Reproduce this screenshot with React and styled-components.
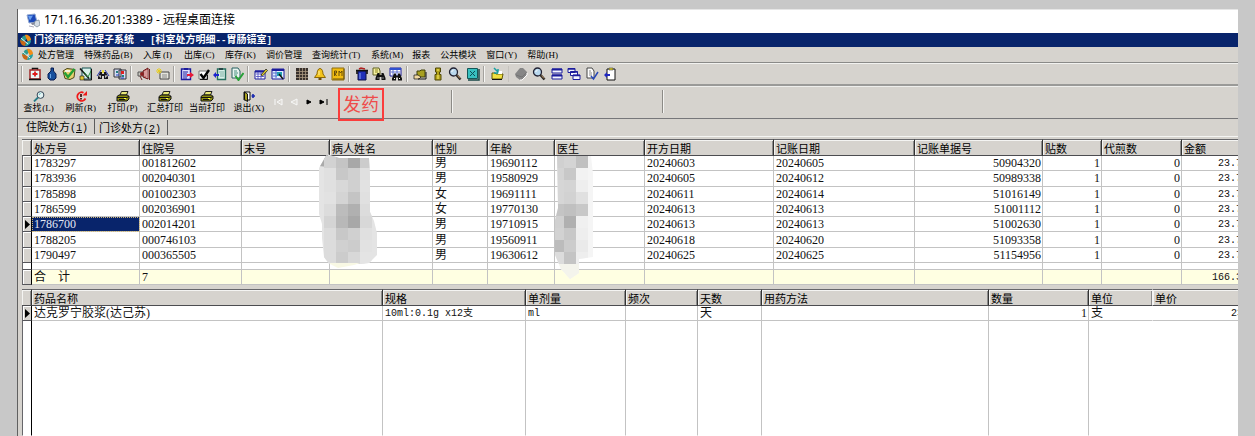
import React from "react";
import styled, { createGlobalStyle, css } from "styled-components";

const FACE = "#d6d3ce";
const NAVY = "#08246b";
const LINE = "#c3c3c3";
const SERIF = '"Liberation Serif", "Noto Sans CJK SC", serif';
const MONO = '"Liberation Mono", "Noto Sans CJK SC", monospace';

const GlobalStyle = createGlobalStyle`
  * { box-sizing: border-box; }
  body { margin: 0; background: #c8c8c8; color: #000; overflow: hidden; }
  button { font: inherit; color: inherit; background: none; border: 0; padding: 0; margin: 0; }
  svg { display: block; }
`;

const Desktop = styled.div`
  display: flex;
  flex-direction: column;
  height: 100vh;
  padding: 9px 17px 0;
`;

const Window = styled.main`
  flex: 1;
  min-height: 0;
  display: flex;
  flex-direction: column;
  overflow: hidden;
  background: ${FACE};
  border-left: 1px solid #606060;
`;

const RemoteTitle = styled.header`
  flex: none;
  display: flex;
  align-items: center;
  gap: 4px;
  height: 24px;
  padding: 0 0 3px 8px;
  border-top: 1px solid #e6e6e6;
  background: #fff;
  font: 12px/18px "Noto Sans", "Noto Sans CJK SC", sans-serif;
`;

const Caption = styled.div`
  flex: none;
  display: flex;
  align-items: center;
  gap: 2px;
  height: 14px;
  padding-left: 1px;
  background: ${NAVY};
  color: #fff;
  font: bold 10px/14px "Noto Sans CJK SC", sans-serif;
  white-space: pre;
`;

const Half = styled.span`
  font: bold 9px/14px "Liberation Mono", monospace;
`;

const MenuBar = styled.nav`
  flex: none;
  display: flex;
  align-items: center;
  gap: 10px;
  height: 15px;
  padding-left: 3px;
  font: 9px/14px ${SERIF};
`;

const SystemIconSlot = styled.span`
  width: 7px;
`;

const MenuItem = styled.button`
  display: flex;
  white-space: nowrap;
`;

const Mnemonic = styled.span`
  width: 13px;
  text-align: center;
`;

const IconBar = styled.div`
  flex: none;
  display: flex;
  align-items: center;
  height: 25px;
  padding: 0 0 3px 4px;
  border-top: 1px solid #8a8a88;
  box-shadow: inset 0 1px #f2f2f0, inset 0 -1px #eeeeec, inset 0 -3px #9a9a98;
`;

const IconGroup = styled.div`
  display: flex;
  justify-content: space-between;
  align-items: center;
  flex: none;
  width: ${(p) => p.$width}px;
  height: 16px;
  padding: 0 4px 0 5px;
  border-left: 1px solid ${(p) => (p.$soft ? "#c6c3be" : "#f6f6f4")};
  box-shadow: -1px 0 ${(p) => (p.$soft ? "transparent" : "#a4a29e")};
`;

const IconButton = styled.button`
  width: 14px;
  height: 14px;
`;

const ActionBar = styled.div`
  position: relative;
  flex: none;
  display: flex;
  align-items: stretch;
  height: 32px;
  border-bottom: 1px solid #77777a;
  font: 9px/11px ${SERIF};
`;

const ActionButton = styled.button`
  flex: none;
  display: flex;
  flex-direction: column;
  align-items: center;
  gap: 1px;
  width: 42px;
  padding-top: 4px;
`;

const ActionLabel = styled.span`
  display: flex;
  justify-content: center;
  white-space: nowrap;
`;

const Navigator = styled.div`
  flex: none;
  display: flex;
  align-items: center;
  gap: 5px;
  padding: 0 0 2px 4px;
`;

const NavButton = styled.button`
  width: 10px;
  height: 8px;
`;

const Divider = styled.i`
  flex: none;
  width: 2px;
  height: 23px;
  margin: 3px 0 0 ${(p) => p.$gap}px;
  border-left: 1px solid #8c8a86;
  border-right: 1px solid #f4f4f2;
`;

const Dispense = styled.button`
  position: absolute;
  z-index: 2;
  left: 320px;
  top: 1px;
  width: 46px;
  height: 33px;
  && {
    padding-bottom: 3px;
    border: 2px solid #fb3d3c;
    color: #ee4c4b;
    font: 18px/26px "Noto Sans CJK SC", sans-serif;
  }
`;

const Tabs = styled.div`
  flex: none;
  display: flex;
  height: 17px;
  padding-left: 1px;
`;

const Tab = styled.button`
  flex: none;
  width: ${(p) => (p.$active ? 76 : 73)}px;
  height: 15px;
  margin-top: ${(p) => (p.$active ? 0 : 1)}px;
  white-space: nowrap;
  text-align: left;
  && {
    padding-left: ${(p) => (p.$active ? 7 : 4)}px;
    border-right: 1px solid #5c5c5c;
    font: 11px/15px "Noto Sans CJK SC", sans-serif;
  }
`;

const TabKey = styled.span`
  font: 10px/15px ${MONO};
`;

const TabPage = styled.section`
  flex: 1;
  min-height: 0;
  display: flex;
  flex-direction: column;
  padding: 2px 0 0 4px;
  border-top: 1px solid #f4f4f2;
`;

const Pane = styled.div`
  position: relative;
  overflow: hidden;
  flex: ${(p) => (p.$fill ? "1" : "none")};
  min-height: 0;
  margin-bottom: ${(p) => (p.$fill ? 0 : 4)}px;
`;

const Grid = styled.table`
  table-layout: fixed;
  width: ${(p) => p.$width}px;
  min-width: 100%;
  height: ${(p) => p.$height};
  border-collapse: separate;
  border-spacing: 0;
  background: #fff;
`;

const cell = css`
  padding: 0 1px;
  overflow: hidden;
  white-space: pre;
  text-align: left;
`;

const Head = styled.th`
  ${cell}
  height: 17px;
  padding-left: 2px;
  background: ${FACE};
  border-top: 1px solid #66666a;
  border-bottom: 1px solid #4c4c50;
  border-right: 1px solid ${(p) => (p.$light ? "#f4f4f4" : "#333")};
  box-shadow: inset 1px 1px #f4f4f2, inset -1px 0 #8c8c8c;
  font: 11px/14px "Noto Sans CJK SC", sans-serif;
`;

const Marker = styled.td`
  ${cell}
  padding: 0;
  background: ${(p) => (p.$blank ? "#fff" : FACE)};
  border-left: 1px solid #66666a;
  border-right: 1px solid #000;
  border-bottom: 1px solid ${(p) => (p.$open ? "transparent" : "#55555a")};
  box-shadow: inset 1px 1px ${(p) => (p.$blank ? "transparent" : "#fff")};
`;

const Cell = styled.td`
  ${cell}
  padding: ${(p) => (p.$mono ? "2px" : "0")} 1px 0 2px;
  border-right: 1px solid ${(p) => (p.$noRule ? "transparent" : LINE)};
  border-bottom: 1px solid ${(p) => (p.$open ? "transparent" : LINE)};
  font: ${(p) => (p.$mono ? "10px/12px" : "12px/14px")} ${(p) => (p.$mono ? MONO : SERIF)};
  text-align: ${(p) => (p.$right ? "right" : "left")};
  background: ${(p) => (p.$total ? "#ffffe2" : p.$selected ? NAVY : "transparent")};
  color: ${(p) => (p.$selected ? "#e4e8f4" : "#111")};
  ${(p) => p.$selected && "outline: 1px dotted #d0b878; outline-offset: -1px;"}
`;

const Row = styled.tr`
  ${(p) => p.$height && `height: ${p.$height};`}
`;

const Mosaic = styled.svg`
  position: absolute;
  left: 296px;
  top: 15px;
  pointer-events: none;
`;

/* ---------- icons ---------- */

const K = "#111";
const B = "#1c1c9c";

const Glyph = ({ children }) => (
  <svg width="14" height="14" viewBox="0 0 14 14" fill="none" aria-hidden="true">
    {children}
  </svg>
);

const Binoculars = ({ c = K, x = 0, y = 0 }) => (
  <g transform={`translate(${x} ${y})`}>
    <path d="M2 3h2v2h2V3h2l2 5v2H6V7H4v3H0V8z" fill={c} />
    <path d="M2 8h1M7 8h1" stroke="#fff" />
  </g>
);

const Lens = () => (
  <>
    <circle cx="5.5" cy="5" r="4" fill="#b9d8ee" stroke="#223" strokeWidth="1.3" />
    <path d="M3.500 5l2-2.200" stroke="#fff" />
    <path d="M8.500 8l4 4.500" stroke="#222" strokeWidth="2.500" />
    <path d="M9.500 8.500l2.500 3" stroke="#b98a5a" />
  </>
);

const icons = {
  aid: (
    <>
      <path d="M4.500 3V1.500h5V3" stroke={K} strokeWidth="1.500" />
      <rect x="2" y="3" width="10" height="9" fill="#f4f4f4" stroke="#a02828" strokeWidth="1.500" />
      <rect x="3.500" y="4.500" width="7" height="5.500" fill="#dff8f8" />
      <path d="M7 4.500v5M4.500 7h5" stroke="#e01818" strokeWidth="1.800" />
      <path d="M1 12.500h12" stroke={K} strokeWidth="1.500" />
    </>
  ),
  bottle: (
    <>
      <path d="M6 1h2.500v3l2.500 3v4l-2 2H5l-2-2V7l3-3z" fill="#18509c" stroke="#0a1c50" />
      <path d="M5.500 7v4" stroke="#6aa8e8" />
    </>
  ),
  check: (
    <>
      <path d="M1 4l4-2.500 8 1-1 8-4 2-5-1z" fill="#e8d070" stroke="#4c4818" />
      <path d="M3 4h5" stroke="#fff" strokeWidth="1.500" />
      <path d="M2.500 5.500L6 10l6.500-8" stroke="#24a034" strokeWidth="2.400" />
    </>
  ),
  note: (
    <>
      <path d="M3 1h9v11H3z" fill="#d8f0ea" stroke="#145050" />
      <path d="M1 1.500l9 10" stroke="#111" strokeWidth="1.500" />
      <path d="M5 5l4 5 3-6" stroke="#2a8c3c" />
      <path d="M1 9h4v4H1z" fill="#e0c830" stroke={K} strokeWidth=".6" />
      <path d="M12.500 2v11H5" stroke={K} />
    </>
  ),
  search: (
    <>
      <Binoculars x={2} y={2} c="#16161e" />
      <path d="M1 9l4-6M9 3l4 6" stroke="#2838b0" />
      <path d="M6 3h2v3H6z" fill="#e8d838" />
      <path d="M3 9h2M9 9h2" stroke="#fff" />
    </>
  ),
  people: (
    <>
      <path d="M1 2h7v8H1zM6 3h7v9H6z" fill="#d4dcf4" stroke="#303038" />
      <path d="M3 4h2v2H3zM9 8h2v2H9z" fill="#208080" />
      <path d="M8 4h3v3H8z" fill="#e02020" />
      <path d="M3 8h3M8 11h3" stroke="#2040c0" />
    </>
  ),
  horn: (
    <>
      <path d="M6 4l5-3v11L6 10z" fill="#c87070" stroke="#6c1818" />
      <path d="M1 5h5v4H1z" fill="#c8c8c0" stroke="#555" />
      <path d="M3 7a2 2 0 1 0 4 0a2 2 0 1 0-4 0" fill="#8c2020" />
      <path d="M8 4v5M10 3v8" stroke="#fff" strokeWidth=".6" />
      <path d="M3 9l2 4M12.500 2v11" stroke="#702020" />
    </>
  ),
  card: (
    <>
      <path d="M4 5h9v7H4z" fill="#e4e4dc" stroke="#444" />
      <path d="M6 8h5M6 10h5" stroke="#888" />
      <path d="M3 1v6M0 4h6M1 2l4 4M5 2L1 6" stroke="#e6cc20" />
    </>
  ),
  clipboard: (
    <>
      <path d="M1.500 2h9v10.500h-9z" fill="#dfe0ff" stroke={B} strokeWidth="1.400" />
      <path d="M4 1h4v2H4z" fill={B} />
      <path d="M3 5h5M3 7h4M3 9h5M3 11h4" stroke={B} />
      <path d="M7 7h3V5l4 3-4 3V9H7z" fill="#e81838" />
    </>
  ),
  tick: (
    <>
      <path d="M2 4h8v8H2z" fill="#fff" stroke="#777" />
      <path d="M3.500 7l3 4L12 3" stroke="#000" strokeWidth="2.400" />
      <path d="M3 12.500h7.500V8" stroke={K} />
    </>
  ),
  paste: (
    <>
      <path d="M4.500 2h8v10.500h-8z" fill="#d8f0e8" stroke="#287060" strokeWidth="1.400" />
      <path d="M6 1h4v2H6z" fill="#284848" />
      <path d="M6 5h5M7 7h4M7 9h4" stroke="#80b0a4" />
      <path d="M6 7H3V5L0 8l3 3V9h3z" fill="#1c24d0" />
    </>
  ),
  pagecheck: (
    <>
      <path d="M2 1h6l2 3v7H2z" fill="#e8f4f0" stroke="#286060" />
      <path d="M4 4h3M4 6h4M4 8h3" stroke="#489080" />
      <path d="M5.500 9l3 4 5-7" stroke="#28a038" strokeWidth="2" />
    </>
  ),
  edit: (
    <>
      <path d="M1 4h10v8H1z" fill="#fff" stroke={B} />
      <path d="M1 4.500h10" stroke={B} strokeWidth="2" />
      <path d="M2 7h8M2 9.500h8M4 5v7M7 5v7" stroke="#4848c0" strokeWidth=".8" />
      <path d="M7 8l5-6 1.500 1.500L8.500 9z" fill="#e4d030" stroke={K} strokeWidth=".7" />
    </>
  ),
  sheet: (
    <>
      <path d="M1 2h12v10H1z" fill="#e4f0ff" stroke={B} />
      <path d="M1 3h12" stroke={B} strokeWidth="2" />
      <path d="M2 6h4M2 9h4M5 4v7" stroke="#5070d0" />
      <path d="M6 5h5v4H6z" fill="#20a0b0" />
      <path d="M8 7l4 5" stroke={K} strokeWidth="1.500" />
    </>
  ),
  grid: (
    <>
      <path d="M1 1h12v12H1z" fill="#38302c" />
      <path d="M1 4.500h12M1 7.500h12M1 10.500h12M4.500 1v12M7.500 1v12M10.500 1v12" stroke="#a89880" strokeWidth=".8" />
    </>
  ),
  bell: (
    <>
      <path d="M7 1.500c2 0 3 3 3 5.500l2.500 3.500h-11L4 7c0-2.500 1-5.500 3-5.500z" fill="#f4c41c" stroke="#8c6808" />
      <path d="M5.500 11h3v2h-3z" fill="#6c5010" />
      <path d="M6 4v4" stroke="#fff2a0" />
    </>
  ),
  badge: (
    <>
      <path d="M1 1h12v12H1z" fill="#f2bc10" stroke="#8c6c10" />
      <path d="M3.500 9V4h2v2h-2l2 3M8 4v5M8 4l1.500 2L11 4v5" stroke="#5c4408" strokeWidth=".9" />
      <path d="M2 12h11V2" stroke="#6c5410" />
    </>
  ),
  bin: (
    <>
      <path d="M3 4h8v9H3z" fill="#2030b8" stroke="#0c1048" />
      <path d="M1 3.500h12M2 4v3M12 4v3" stroke={K} strokeWidth="1.600" />
      <path d="M4 2l2-1 4 1" stroke="#b02020" strokeWidth="1.400" />
      <path d="M5 6v6" stroke="#88a0f0" />
    </>
  ),
  findnote: (
    <>
      <path d="M1 1h6l1 3v4H1z" fill="#f4f0a0" stroke="#606020" />
      <path d="M3 3h3M3 5h3" stroke="#908820" />
      <Binoculars x={3.5} y={3} />
    </>
  ),
  findtable: (
    <>
      <path d="M1 1h11v8H1z" fill="#fff" stroke={B} />
      <path d="M1 2h11" stroke="#3050d0" strokeWidth="2" />
      <path d="M2 5h9M4 3v5M8 3v5" stroke="#6070d0" />
      <Binoculars x={3} y={3.5} />
    </>
  ),
  hand: (
    <>
      <path d="M4 4h3l1-1h4v7H4z" fill="#a8a020" stroke="#404008" />
      <path d="M1 8h4l3 2-2 2H1z" fill="#f0d8a0" stroke={K} strokeWidth=".7" />
      <path d="M5 12h8V5" stroke={K} />
    </>
  ),
  key: (
    <>
      <path d="M4.500 1h5v4H8.500v2.500H10V13H4V7.500h1.500V5h-1z" fill="#b0a018" stroke="#504808" />
      <path d="M6 3h2M6 9h2M6 11h2" stroke="#fff070" />
    </>
  ),
  lens: <Lens />,
  book: (
    <>
      <path d="M1.500 1.500h10v10h-10z" fill="#38c0c0" stroke="#145858" />
      <path d="M4 4l5 5M9 4L4 9" stroke="#0c5058" />
      <path d="M2 13h11V2" stroke="#184848" strokeWidth="1.500" />
    </>
  ),
  inbox: (
    <>
      <path d="M2 6h3l1 1h7l-1 5H2z" fill="#f0e040" stroke="#605808" />
      <path d="M4 1l4 4M8 2v4H4" stroke="#18a0a0" strokeWidth="1.500" />
      <path d="M9 4h3v3H8z" fill="#fff" />
      <path d="M2 12.500h10" stroke={K} />
    </>
  ),
  stamp: (
    <>
      <path d="M1 7l5-6h3l4 4v3l-5 5H6L2 10z" fill="#868686" />
      <path d="M6 13h2l5-5V6" stroke="#fff" />
      <path d="M2 8l6 2 4-4" stroke="#747474" />
    </>
  ),
  split: (
    <>
      <path d="M2 2h10v4H2zM2 8h10v4H2z" fill="#f4f6ff" stroke={B} />
      <path d="M2 2.500h10M2 8.500h10" stroke={B} strokeWidth="2" />
    </>
  ),
  cascade: (
    <>
      <path d="M1 1.500h7v4H1zM3.500 4.500h7v4h-7zM6 8h7v4.500H6z" fill="#f4f6ff" stroke={B} />
      <path d="M1 2h7M3.500 5h7M6 8.500h7" stroke={B} strokeWidth="1.600" />
    </>
  ),
  approve: (
    <>
      <path d="M2 1h5l2 3v7H2z" fill="#fff" stroke="#444" />
      <path d="M4 4h2M4 6h3M4 8h3" stroke="#888" />
      <path d="M6 9l2.500 3L13 5" stroke="#2848b8" strokeWidth="1.500" />
    </>
  ),
  import: (
    <>
      <path d="M4 2h8v11H4z" fill="#fff" stroke={K} />
      <path d="M6 1h4v2H6z" fill="#e0d020" stroke="#444" strokeWidth=".6" />
      <path d="M7 7H4V5L1 8l3 3V9h3z" fill="#2028c0" />
    </>
  ),
};

const SystemIcon = () => (
  <svg width="13" height="13" viewBox="0 0 13 13" aria-hidden="true">
    <path d="M1 6l3-4 3-1 1 3-3 4z" fill="#2c9c90" />
    <path d="M6 1c3-1 6 2 6 5L9 8 7 4z" fill="#f08c18" />
    <path d="M12 6c0 4-3 6-6 6l1-4 3-1z" fill="#28a0a0" />
    <path d="M1 6c0 3 2 6 5 6l1-4-3-1z" fill="#c86818" />
    <path d="M2 4l7 6" stroke="#e8f4f4" />
  </svg>
);

const ComputerIcon = () => (
  <svg width="14" height="15" viewBox="0 0 14 15" aria-hidden="true">
    <path d="M1 2l8-1 2 8-8 1z" fill="#1c48b8" stroke="#90a8d0" />
    <path d="M2 3l5-.500-3 5z" fill="#68a0f0" />
    <path d="M5 10l5-1 1 2-5 1z" fill="#889" />
    <path d="M9 8l4-1 1 5-3 2-3-2z" fill="#d4dce4" stroke="#708090" strokeWidth=".7" />
    <path d="M3 13l5 1" stroke="#aab" />
  </svg>
);

const PrinterIcon = () => (
  <svg width="14" height="11" viewBox="0 0 14 11" aria-hidden="true">
    <path d="M4 4l1.500-3.500H12L10.500 4z" fill="#e8e878" stroke="#222" />
    <path d="M1 5.500L3 4h8.500L13 5.500V8l-2 2H1z" fill="#8c8c10" stroke="#111" />
    <path d="M1 6.500h10l2-1.500M3 8.500h6" stroke="#111" fill="none" />
    <path d="M8 7.500h2" stroke="#ffff40" />
  </svg>
);

const actions = [
  {
    label: "查找",
    key: "L",
    icon: (
      <svg width="14" height="11" viewBox="0 0 14 11" fill="none" aria-hidden="true">
        <circle cx="8.500" cy="4" r="3.400" fill="#e4f4f4" stroke="#345" />
        <path d="M6 6.500L2 10.500" stroke="#287c88" strokeWidth="1.800" />
        <path d="M7 4l1.500-2" stroke="#60c0c8" />
      </svg>
    ),
  },
  {
    label: "刷新",
    key: "R",
    icon: (
      <svg width="14" height="11" viewBox="0 0 14 11" fill="none" aria-hidden="true">
        <path d="M9.500 1.700A4.300 4.300 0 1 0 11.500 7.500" stroke="#f01818" strokeWidth="1.800" />
        <path d="M8.500 4.500H13V0z" fill="#f01818" />
        <path d="M7 3v3M7 7v1.500" stroke="#300" strokeWidth="1.600" />
      </svg>
    ),
  },
  { label: "打印", key: "P", icon: <PrinterIcon /> },
  { label: "汇总打印", icon: <PrinterIcon /> },
  { label: "当前打印", icon: <PrinterIcon /> },
  {
    label: "退出",
    key: "X",
    icon: (
      <svg width="14" height="11" viewBox="0 0 14 11" fill="none" aria-hidden="true">
        <path d="M2 1h6v8H2z" fill="#fff" stroke="#111" />
        <path d="M2.500 1l3 2v7.500l-3-2z" fill="#a8a020" stroke="#111" />
        <path d="M13 5H9.500M11 3v4" stroke="#1828b0" strokeWidth="1.600" />
      </svg>
    ),
  },
];

const menus = [
  ["处方管理"], ["特殊药品", "B"], ["入库", "I"], ["出库", "C"], ["库存", "K"], ["调价管理"],
  ["查询统计", "T"], ["系统", "M"], ["报表"], ["公共模块"], ["窗口", "Y"], ["帮助", "H"],
];

const iconGroups = [
  [109, ["aid", "bottle", "check", "note", "search", "people"]],
  [43, ["horn", "card"]],
  [74, ["clipboard", "tick", "paste", "pagecheck"]],
  [41, ["edit", "sheet"]],
  [60, ["grid", "bell", "badge"]],
  [58, ["bin", "findnote", "findtable"]],
  [77, ["hand", "key", "lens", "book"]],
  [24, ["inbox"]],
  [113, ["stamp", "lens", "split", "cascade", "approve", "import"], true],
];

const navShapes = [
  ["首条", "M1 1v6M8 1v6L3 4z", true],
  ["上一条", "M8 1v6L2 4z", true],
  ["下一条", "M3 2v4l4-2z", false],
  ["末条", "M1 2v4l4-2zM8 1v6", false],
];

const rxColumns = [
  ["处方号", 108], ["住院号", 102], ["末号", 88], ["病人姓名", 103], ["性别", 55], ["年龄", 67],
  ["医生", 90], ["开方日期", 129], ["记账日期", 141], ["记账单据号", 128], ["贴数", 59],
  ["代煎数", 80], ["金额", 68],
];

const rxRows = [
  ["1783297", "001812602", "", "", "男", "19690112", "", "20240603", "20240605", "50904320", "1", "0", "23.76"],
  ["1783936", "002040301", "", "", "男", "19580929", "", "20240605", "20240612", "50989338", "1", "0", "23.76"],
  ["1785898", "001002303", "", "", "女", "19691111", "", "20240611", "20240614", "51016149", "1", "0", "23.76"],
  ["1786599", "002036901", "", "", "女", "19770130", "", "20240613", "20240613", "51001112", "1", "0", "23.76"],
  ["1786700", "002014201", "", "", "男", "19710915", "", "20240613", "20240613", "51002630", "1", "0", "23.76"],
  ["1788205", "000746103", "", "", "男", "19560911", "", "20240618", "20240620", "51093358", "1", "0", "23.76"],
  ["1790497", "000365505", "", "", "男", "19630612", "", "20240625", "20240625", "51154956", "1", "0", "23.76"],
];
const rxTotals = ["合    计", "7", "", "", "", "", "", "", "", "", "", "", "166.32"];
const selectedRow = 4;

const drugColumns = [
  ["药品名称", 351], ["规格", 143], ["单剂量", 100], ["频次", 72], ["天数", 64],
  ["用药方法", 227], ["数量", 100], ["单位", 64], ["单价", 110],
];

const nameShades = [
  "d2c4a8cc", "e0c8d0e0", "e0d8d0e2", "e2d4c4e0", "dcbcb0dc", "d4b8a8d8", "dcc8d0e0", "dcd0cce2", "dcccd8e4",
];
const doctorShades = [
  "d0d4c0", "d4c8f2", "d6d4ee", "d6d2e0", "c4c0c8", "d0b0f0", "d2c8ee", "bcccea", "dcc4ee",
];

const shades = (rows, x) =>
  rows.flatMap((row, r) =>
    row.match(/../g).map((v, c) => (
      <rect key={`${x}-${r}-${c}`} x={x + c * 12} y={2 + r * 12} width="12" height="12" fill={`#${v}${v}${v}`} />
    ))
  );

const Redaction = () => (
  <Mosaic width="280" height="126" viewBox="0 0 280 126" aria-hidden="true">
    <clipPath id="patient">
      <path d="M1 14L9 0l12 4 30 0 1 18v36l4 9 3 12v22l-8 8-18 2H12L6 103 4 84V70L1 60z" />
    </clipPath>
    <clipPath id="doctor">
      <path d="M239 2h34l2 18v83l-14 2v14l-9 6-9-10-6-14V66l3-12z" />
    </clipPath>
    <g clipPath="url(#patient)">
      <rect width="60" height="110" fill="#e4e4e4" />
      <path d="M0 12L9 0l9 14z" fill="#aaa" />
      {shades(nameShades, 6)}
    </g>
    <path d="M12 110l8 4 16-3 6-2H12z" fill="#f8f8e4" />
    <g clipPath="url(#doctor)">
      <rect x="236" width="42" height="126" fill="#f5f5f5" />
      {shades(doctorShades, 234)}
      <rect x="236" y="110" width="30" height="16" fill="#f4f4ec" />
    </g>
  </Mosaic>
);

const Pointer = () => (
  <svg width="8" height="9" viewBox="0 0 8 9" aria-hidden="true">
    <path d="M2 0v9l5-4.500z" fill="#000" />
  </svg>
);

const Columns = ({ columns }) => (
  <colgroup>
    <col style={{ width: 10 }} />
    {columns.map(([name, width]) => <col key={name} style={{ width }} />)}
  </colgroup>
);

const HeadRow = ({ columns }) => (
  <thead>
    <tr>
      <Head aria-label="标记" />
      {columns.map(([name]) => <Head key={name} scope="col" $light={name === "单位"}>{name}</Head>)}
    </tr>
  </thead>
);

export default function App() {
  return (
    <Desktop>
      <GlobalStyle />
      <Window>
        <RemoteTitle><ComputerIcon />171.16.36.201:3389 - 远程桌面连接</RemoteTitle>
        <Caption>
          <SystemIcon />
          <span>门诊西药房管理子系统<Half> - [</Half>科室处方明细<Half>--</Half>胃肠镜室<Half>]</Half></span>
        </Caption>
        <MenuBar>
          <SystemIconSlot><SystemIcon /></SystemIconSlot>
          {menus.map(([label, key]) => (
            <MenuItem key={label} type="button">{label}{key && <Mnemonic>({key})</Mnemonic>}</MenuItem>
          ))}
        </MenuBar>
        <IconBar>
          {iconGroups.map(([width, names, soft], i) => (
            <IconGroup key={i} $width={width} $soft={soft}>
              {names.map((name) => (
                <IconButton key={name} type="button" aria-label={name}><Glyph>{icons[name]}</Glyph></IconButton>
              ))}
            </IconGroup>
          ))}
        </IconBar>
        <ActionBar>
          {actions.map(({ label, key, icon }) => (
            <ActionButton key={label} type="button">
              {icon}
              <ActionLabel>{label}{key && <Mnemonic>({key})</Mnemonic>}</ActionLabel>
            </ActionButton>
          ))}
          <Navigator>
            {navShapes.map(([label, d, off]) => (
              <NavButton key={label} type="button" aria-label={label} disabled={off}>
                <svg width="10" height="8" viewBox="0 0 10 8" aria-hidden="true">
                  <path d={d} fill={off ? "#dedbd6" : "#000"} stroke={off ? "#f8f8f8" : "#000"} />
                </svg>
              </NavButton>
            ))}
          </Navigator>
          <Divider $gap={122} />
          <Divider $gap={209} />
          <Dispense type="button">发药</Dispense>
        </ActionBar>
        <Tabs role="tablist">
          <Tab type="button" role="tab" aria-selected="true" $active>住院处方<TabKey>(<u>1</u>)</TabKey></Tab>
          <Tab type="button" role="tab" aria-selected="false">门诊处方<TabKey>(<u>2</u>)</TabKey></Tab>
        </Tabs>
        <TabPage>
          <Pane>
            <Grid $width={1228} $height="146px">
              <Columns columns={rxColumns} />
              <HeadRow columns={rxColumns} />
              <tbody>
                {rxRows.map((row, r) => (
                  <Row key={row[0]}>
                    <Marker>{r === selectedRow && <Pointer />}</Marker>
                    {row.map((text, c) => (
                      <Cell key={c} $right={c >= 9} $mono={c === 12} $selected={r === selectedRow && c === 0}>{text}</Cell>
                    ))}
                  </Row>
                ))}
                <Row $height="7px">
                  <Marker $blank />
                  {rxColumns.map(([name]) => <Cell key={name} />)}
                </Row>
                <Row $height="15px">
                  <Marker />
                  {rxTotals.map((text, c) => (
                    <Cell key={c} $total $right={c >= 9} $mono={c === 12}>{text}</Cell>
                  ))}
                </Row>
              </tbody>
            </Grid>
            <Redaction />
          </Pane>
          <Pane $fill>
            <Grid $width={1241} $height="100%">
              <Columns columns={drugColumns} />
              <HeadRow columns={drugColumns} />
              <tbody>
                <Row $height="15px">
                  <Marker><Pointer /></Marker>
                  <Cell>达克罗宁胶浆(达己苏)</Cell>
                  <Cell $mono>10ml:0.1g x12支</Cell>
                  <Cell $mono>ml</Cell>
                  <Cell />
                  <Cell>天</Cell>
                  <Cell />
                  <Cell $right>1</Cell>
                  <Cell $noRule>支</Cell>
                  <Cell $right $mono>23.76</Cell>
                </Row>
                <Row $height="100%">
                  <Marker $blank $open />
                  {drugColumns.map(([name]) => <Cell key={name} $open $noRule={name === "单位"} />)}
                </Row>
              </tbody>
            </Grid>
          </Pane>
        </TabPage>
      </Window>
    </Desktop>
  );
}
